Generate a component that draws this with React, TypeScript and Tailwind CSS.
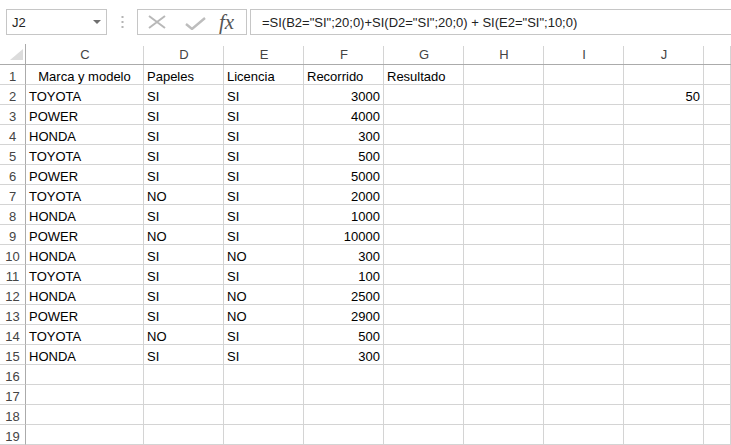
import React from 'react';

type Row = { n: number; c?: string; d?: string; e?: string; f?: string; g?: string; j?: string; center?: boolean };

const rows: Row[] = [
  { n: 1, c: 'Marca y modelo', d: 'Papeles', e: 'Licencia', f: 'Recorrido', g: 'Resultado', center: true },
  { n: 2, c: 'TOYOTA', d: 'SI', e: 'SI', f: '3000', j: '50' },
  { n: 3, c: 'POWER', d: 'SI', e: 'SI', f: '4000' },
  { n: 4, c: 'HONDA', d: 'SI', e: 'SI', f: '300' },
  { n: 5, c: 'TOYOTA', d: 'SI', e: 'SI', f: '500' },
  { n: 6, c: 'POWER', d: 'SI', e: 'SI', f: '5000' },
  { n: 7, c: 'TOYOTA', d: 'NO', e: 'SI', f: '2000' },
  { n: 8, c: 'HONDA', d: 'SI', e: 'SI', f: '1000' },
  { n: 9, c: 'POWER', d: 'NO', e: 'SI', f: '10000' },
  { n: 10, c: 'HONDA', d: 'SI', e: 'NO', f: '300' },
  { n: 11, c: 'TOYOTA', d: 'SI', e: 'SI', f: '100' },
  { n: 12, c: 'HONDA', d: 'SI', e: 'NO', f: '2500' },
  { n: 13, c: 'POWER', d: 'SI', e: 'NO', f: '2900' },
  { n: 14, c: 'TOYOTA', d: 'NO', e: 'SI', f: '500' },
  { n: 15, c: 'HONDA', d: 'SI', e: 'SI', f: '300' },
  { n: 16 },
  { n: 17 },
  { n: 18 },
  { n: 19 },
];

const cols = ['C', 'D', 'E', 'F', 'G', 'H', 'I', 'J', ''];

const Cell = ({ text, right, center }: { text?: string; right?: boolean; center?: boolean }) => (
  <div
    className={`h-[20px] border-r border-b border-[#d4d4d4] flex items-end px-[3px] overflow-hidden whitespace-nowrap ${
      right ? 'justify-end' : center ? 'justify-center' : 'justify-start'
    }`}
  >
    {text}
  </div>
);

const App = () => {
  const isNum = (v?: string) => !!v && /^\d+$/.test(v);

  return (
    <div
      className="w-[731px] h-[445px] overflow-hidden bg-white text-[13px] leading-[15px] text-black"
      style={{ fontFamily: '"Liberation Sans", Arial, sans-serif' }}
    >
      {/* Formula bar */}
      <div className="h-[44px] flex items-start pt-[9px] pl-[6px]">
        <div className="w-[101px] h-[26px] border border-[#c6c6c6] flex items-center justify-between pl-[5px] pr-[5px]">
          <span className="text-[#222]">J2</span>
          <svg width="8" height="4" viewBox="0 0 8 4">
            <polygon points="0,0 8,0 4,4" fill="#6f6f6f" />
          </svg>
        </div>
        <div className="w-[30px] h-[26px] flex items-center justify-center">
          <svg width="3" height="12" viewBox="0 0 3 12">
            <rect x="0.5" y="0" width="2" height="2" fill="#b4b4b4" />
            <rect x="0.5" y="5" width="2" height="2" fill="#b4b4b4" />
            <rect x="0.5" y="10" width="2" height="2" fill="#b4b4b4" />
          </svg>
        </div>
        <div className="w-[110px] h-[26px] border border-[#c6c6c6] flex items-center pl-[10px]">
          <svg width="18" height="14" viewBox="0 0 18 14">
            <path d="M1 1 L17 13 M17 1 L1 13" stroke="#b8b8b8" strokeWidth="2" />
          </svg>
          <svg width="21" height="13" viewBox="0 0 21 13" className="ml-[19px] mt-[3px]">
            <path d="M1 7 L7 12 L20 1" stroke="#bdbdbd" strokeWidth="2.4" fill="none" />
          </svg>
          <span
            className="ml-[13px] text-[21px] leading-[20px] italic text-[#555] -mt-[1px]"
            style={{ fontFamily: '"Liberation Serif", "Times New Roman", serif' }}
          >
            fx
          </span>
        </div>
        <div className="w-[3px]" />
        <div className="flex-1 h-[26px] border border-[#c6c6c6] border-r-0 flex items-center pl-[11px] text-[#222]">
          =SI(B2="SI";20;0)+SI(D2="SI";20;0) + SI(E2="SI";10;0)
        </div>
      </div>

      {/* Sheet grid */}
      <div className="grid grid-cols-[26px_118px_repeat(7,80px)_1fr]">
        {/* Column headers */}
        <div className="h-[21px] border-r border-b border-[#ababab] flex items-end justify-end pr-[2px] pb-[4px]">
          <svg width="13" height="11" viewBox="0 0 13 11">
            <polygon points="13,0 13,11 0,11" fill="#dcdcdc" />
          </svg>
        </div>
        {cols.map((c, i) => (
          <div
            key={i}
            className="h-[21px] border-b border-[#ababab] flex items-center justify-center text-[#444] relative"
          >
            {c}
            <span className="absolute right-0 top-[2px] bottom-0 w-px bg-[#d4d4d4]" />
          </div>
        ))}

        {rows.map(r => (
          <React.Fragment key={r.n}>
            <div className="h-[20px] border-r border-r-[#ababab] border-b border-b-[#d4d4d4] flex items-end justify-center text-[#444]">
              {r.n}
            </div>
            <Cell text={r.c} center={r.center} />
            <Cell text={r.d} />
            <Cell text={r.e} />
            <Cell text={r.f} right={isNum(r.f)} />
            <Cell text={r.g} />
            <Cell />
            <Cell />
            <Cell text={r.j} right={isNum(r.j)} />
            <Cell />
          </React.Fragment>
        ))}
      </div>
    </div>
  );
};

export default App;
